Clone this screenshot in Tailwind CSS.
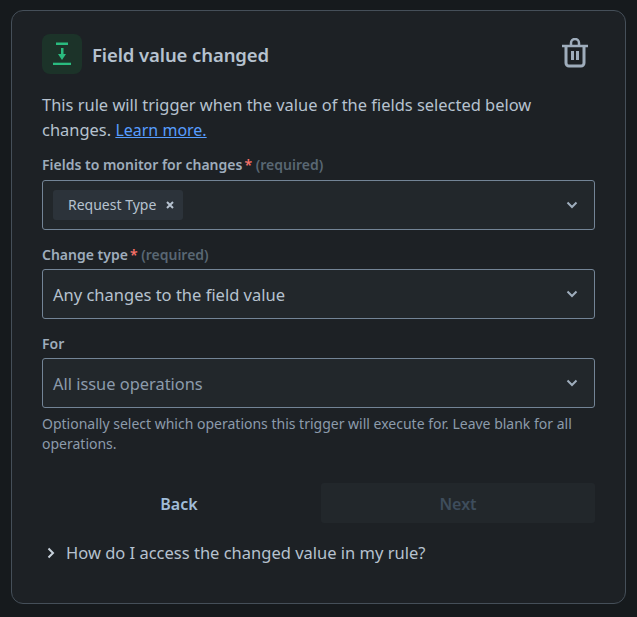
<!DOCTYPE html>
<html lang="en">
<head>
<meta charset="UTF-8">
<title>Field value changed</title>
<script src="https://cdn.jsdelivr.net/npm/@tailwindcss/browser@4"></script>
</head>
<body class="bg-[#161a1d] font-['Noto_Sans',sans-serif] h-[617px] overflow-hidden">
  <div class="ml-[11px] mt-[10px] w-[615px] h-[594px] rounded-[12px] border border-[#454f59] bg-[#1d2125] pl-[30px] pr-[30px] pt-[23px]">
    <!-- Header -->
    <div class="flex items-center h-[40px]">
      <div class="w-[40px] h-[40px] rounded-[8px] bg-[#1c3329] flex items-center justify-center">
        <svg width="24" height="24" viewBox="0 0 24 24" fill="#2abb7f"><rect x="6" y="0.500" width="12" height="2.500"/><rect x="11" y="6" width="2.500" height="7"/><path d="M8 12h8l-4 6z"/><rect x="3" y="20.700" width="18" height="2.300"/></svg>
      </div>
      <h1 class="ml-[10px] mt-[2px] text-[18.500px] font-semibold text-[#b6c2cf] tracking-[-0.100px]">Field value changed</h1>
      <svg class="ml-auto mr-[7px] mt-[-2px]" width="26" height="30" viewBox="0 0 26 30" fill="none" stroke="#9fadbc" stroke-width="3"><path d="M0 8h26" stroke-width="2.500"/><path d="M9 8V5a4 4 0 0 1 8 0v3" stroke-width="2.500"/><path d="M4 9v16a3 3 0 0 0 3 3h12a3 3 0 0 0 3-3V9"/><path d="M10.500 13v9M15.500 13v9"/></svg>
    </div>
    <!-- Description -->
    <p class="mt-[18px] max-w-[510px] text-[16.450px] leading-[25px] text-[#b6c2cf]">This rule will trigger when the value of the fields selected below changes. <a class="text-[16px] text-[#579dff] underline" href="#">Learn more.</a></p>
    <!-- Fields -->
    <div class="mt-[12px] text-[14px] leading-[20px] font-semibold text-[#9fadbc]">Fields to monitor for changes<span class="text-[#f87168] ml-[2px]">*</span> <span class="text-[#596773]">(required)</span></div>
    <div class="mt-[5px] h-[50px] rounded-[3px] border border-[#738496] bg-[#22272b] flex items-center pl-[10px] pr-[16px]">
      <div class="h-[30px] w-[130px] rounded-[3px] bg-[#2c333a] flex items-center pl-[15px] text-[14px] text-[#b6c2cf]"><span class="mb-[2px]">Request Type</span>
        <svg class="ml-[10px]" width="8" height="8" viewBox="0 0 8 8" stroke="#b6c2cf" stroke-width="2"><path d="M1 1l6 6M7 1l-6 6"/></svg>
      </div>
      <svg class="ml-auto" width="12" height="8" viewBox="0 0 12 8" fill="none" stroke="#9fadbc" stroke-width="2"><path d="M1.500 1.500L6 6l4.500-4.500"/></svg>
    </div>
    <div class="mt-[15px] text-[14px] leading-[20px] font-semibold text-[#9fadbc]">Change type<span class="text-[#f87168] ml-[2px]">*</span> <span class="text-[#596773]">(required)</span></div>
    <div class="mt-[4px] h-[50px] rounded-[3px] border border-[#738496] bg-[#22272b] flex items-center pl-[10px] pr-[16px] text-[16.500px] text-[#b6c2cf]"><span class="mt-[2px]">Any changes to the field value</span>
      <svg class="ml-auto" width="12" height="8" viewBox="0 0 12 8" fill="none" stroke="#9fadbc" stroke-width="2"><path d="M1.500 1.500L6 6l4.500-4.500"/></svg>
    </div>
    <div class="mt-[15px] text-[14px] leading-[20px] font-semibold text-[#9fadbc]">For</div>
    <div class="mt-[4px] h-[50px] rounded-[3px] border border-[#738496] bg-[#22272b] flex items-center pl-[10px] pr-[16px] text-[16.400px] text-[#8c9bab]"><span class="mt-[2px]">All issue operations</span>
      <svg class="ml-auto" width="12" height="8" viewBox="0 0 12 8" fill="none" stroke="#9fadbc" stroke-width="2"><path d="M1.500 1.500L6 6l4.500-4.500"/></svg>
    </div>
    <p class="mt-[6px] text-[14px] leading-[20px] text-[#8c9bab]">Optionally select which operations this trigger will execute for. Leave blank for all operations.</p>
    <!-- Buttons -->
    <div class="mt-[29px] flex gap-[5px] text-[16px] font-semibold">
      <div class="w-[274px] h-[40px] pt-[2px] flex items-center justify-center text-[#a1bdd9]">Back</div>
      <div class="w-[274px] h-[40px] pt-[2px] rounded-[3px] bg-[#22272b] flex items-center justify-center text-[#3e4d5c]">Next</div>
    </div>
    <!-- Help -->
    <div class="mt-[18px] flex items-center h-[24px] text-[16.500px] text-[#b6c2cf]">
      <svg class="ml-[5px]" width="8" height="12" viewBox="0 0 8 12" fill="none" stroke="#c7d1db" stroke-width="2"><path d="M1.500 1.500L6 6l-4.500 4.500"/></svg>
      <span class="ml-[11px]">How do I access the changed value in my rule?</span>
    </div>
  </div>
</body>
</html>
